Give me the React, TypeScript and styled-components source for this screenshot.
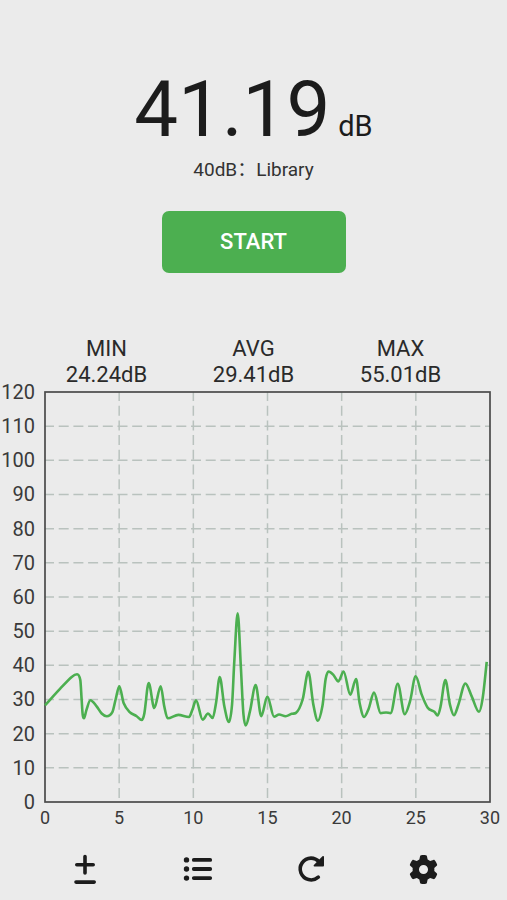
import React from "react";
import styled, { createGlobalStyle } from "styled-components";
import { FaGear } from "react-icons/fa6";

const GlobalStyle = createGlobalStyle`
  * { box-sizing: border-box; }
  body {
    margin: 0;
    background: #ebebeb;
    color: #1c1c1c;
    font-family: Roboto, "Noto Sans CJK SC", sans-serif;
  }
`;

const Screen = styled.main`
  display: flex;
  flex-direction: column;
  min-height: 100vh;
  padding-top: 64px;
`;

const Meter = styled.section`
  display: flex;
  flex-direction: column;
  align-items: center;
`;

const Reading = styled.h1`
  display: flex;
  align-items: baseline;
  gap: 8px;
  margin: 0;
  font-size: 78px;
  font-weight: 400;
  line-height: 92px;
`;

const Unit = styled.span`
  font-size: 29px;
  line-height: 32px;
`;

const Level = styled.p`
  margin: 2px 0 0;
  font-size: 19px;
  line-height: 24px;
  color: #333;
`;

const StartButton = styled.button`
  width: 184px;
  height: 62px;
  margin-top: 29px;
  border: 0;
  border-radius: 7px;
  background: #4caf50;
  color: #fff;
  font: 500 22px/26px Roboto, sans-serif;
`;

const Stats = styled.dl`
  display: grid;
  grid-template-columns: repeat(3, 1fr);
  margin: 63px 33px 0;
  font-size: 22px;
  line-height: 26px;
  text-align: center;
  color: #2a2a2a;
`;

const StatName = styled.dt``;

const StatValue = styled.dd`
  margin: 0;
`;

const Chart = styled.section`
  display: grid;
  grid-template-columns: 35px 1fr;
  column-gap: 10px;
  margin: 4px 17px 0 0;
  color: #3a3a3a;
`;

const DecibelAxis = styled.div`
  display: flex;
  flex-direction: column;
  justify-content: space-between;
  margin: -12px 0;
  font-size: 20px;
  line-height: 24px;
  text-align: right;
`;

const Plot = styled.svg`
  display: block;
  width: 100%;
  overflow: visible;
`;

const TimeAxis = styled.div`
  grid-column: 2;
  display: flex;
  justify-content: space-between;
  margin: 5px -15px 0;
  font-size: 18px;
  line-height: 22px;
  text-align: center;
`;

const Tick = styled.span`
  min-width: 30px;
`;

const Toolbar = styled.nav`
  display: grid;
  grid-template-columns: repeat(4, 1fr);
  margin: 18px 27px 0 29px;
`;

const ToolButton = styled.button`
  display: flex;
  align-items: center;
  justify-content: center;
  height: 44px;
  padding: 0;
  border: 0;
  background: none;
  color: #1c1c1c;
`;

const STATS = [
  { name: "MIN", value: "24.24dB" },
  { name: "AVG", value: "29.41dB" },
  { name: "MAX", value: "55.01dB" },
];

const DECIBELS = [120, 110, 100, 90, 80, 70, 60, 50, 40, 30, 20, 10, 0];
const SECONDS = [0, 5, 10, 15, 20, 25, 30];

const PLOT_WIDTH = 445;
const PLOT_HEIGHT = 410;

const SAMPLES: [number, number][] = [
  [0, 28.3], [1.01, 33.1], [1.8, 36.6], [2.16, 37.4], [2.38, 35.7], [2.47, 30], [2.54, 25.6], [2.63, 24.5],
  [2.79, 26.9], [3.06, 29.8], [3.48, 28], [3.82, 25.9], [4.16, 25.1], [4.54, 26.3], [4.76, 30], [5.01, 33.9],
  [5.3, 29], [5.69, 26.4], [6.18, 25.1], [6.52, 24], [6.7, 26], [6.99, 34.8], [7.37, 27.5], [7.8, 33.9],
  [8.04, 28], [8.27, 24.5], [8.99, 25.5], [9.71, 24.9], [9.93, 26.9], [10.18, 29.8], [10.63, 24.1],
  [10.99, 25.9], [11.3, 24.6], [11.53, 29], [11.78, 36.6], [12.09, 28], [12.4, 23.4], [12.61, 28.5],
  [12.76, 41], [12.99, 55.2], [13.21, 39], [13.37, 26.1], [13.53, 22.4], [13.82, 26.6], [14.2, 34.2],
  [14.58, 25.1], [14.99, 30.9], [15.44, 25], [15.78, 25.6], [16.22, 25.1], [16.63, 25.8], [16.92, 26.1],
  [17.37, 30], [17.75, 38.1], [18.09, 28.5], [18.4, 23.8], [18.7, 28], [18.92, 36], [19.12, 38.2],
  [19.44, 37.2], [19.78, 35.3], [20.13, 38.2], [20.58, 31.4], [20.97, 36], [21.21, 29], [21.51, 24.9],
  [21.82, 27.3], [22.18, 32], [22.63, 26], [22.99, 26.2], [23.3, 26], [23.78, 34.6], [24.25, 25.7],
  [24.61, 29.5], [24.99, 36.8], [25.39, 31.5], [25.8, 27.6], [26.25, 26.4], [26.47, 25.3], [26.67, 28],
  [26.99, 35.7], [27.3, 28.5], [27.57, 25.4], [27.87, 28.5], [28.34, 34.7], [28.76, 31], [29.26, 26.4],
  [29.51, 30.5], [29.78, 41],
];

const toX = (second: number) => (second / 30) * PLOT_WIDTH;
const toY = (decibel: number) => PLOT_HEIGHT - (decibel / 120) * PLOT_HEIGHT;

// Monotone cubic interpolation: the curve never overshoots a sample.
function smoothPath(samples: [number, number][]) {
  const points = samples.map(([s, d]) => [toX(s), toY(d)]);
  const slope = (i: number) =>
    (points[i + 1][1] - points[i][1]) / (points[i + 1][0] - points[i][0]);
  const last = points.length - 1;
  const tangents = points.map((_, i) => {
    if (i === 0) return slope(0);
    if (i === last) return slope(last - 1);
    const before = slope(i - 1);
    const after = slope(i);
    if (before * after <= 0) return 0;
    const across =
      (points[i + 1][1] - points[i - 1][1]) / (points[i + 1][0] - points[i - 1][0]);
    const limit = 3 * Math.min(Math.abs(before), Math.abs(after));
    return Math.sign(across) * Math.min(Math.abs(across), limit);
  });
  let path = `M${points[0][0]} ${points[0][1]}`;
  for (let i = 0; i < last; i++) {
    const [x0, y0] = points[i];
    const [x1, y1] = points[i + 1];
    const third = (x1 - x0) / 3;
    path += `C${x0 + third} ${y0 + tangents[i] * third} ${x1 - third} ${y1 - tangents[i + 1] * third} ${x1} ${y1}`;
  }
  return path;
}

const Icon = styled.svg.attrs({
  width: 32,
  height: 32,
  viewBox: "0 0 32 32",
  fill: "none",
  stroke: "currentColor",
  strokeLinecap: "round",
  strokeLinejoin: "round",
  "aria-hidden": true,
})``;

function PlusMinusIcon() {
  return (
    <Icon strokeWidth="3.6">
      <path d="M16 3.5v16.4M7.8 11.7h16.4M7 29.1h18.2" />
    </Icon>
  );
}

function ListIcon() {
  return (
    <Icon>
      <path d="M11.8 6.9h16.4M11.8 16h16.4M11.8 25.1h16.4" strokeWidth="3.8" />
      <path d="M4.5 6.9h.01M4.5 16h.01M4.5 25.1h.01" strokeWidth="5.4" />
    </Icon>
  );
}

function ReloadIcon() {
  return (
    <Icon>
      <path d="M23.3 24.2A10.9 10.9 0 1 1 16 5.1c3.6 0 6.1 1.5 8.4 4" strokeWidth="3.6" />
      <path d="M28.1 4v8.6h-8.6z" fill="currentColor" strokeWidth="1.8" />
    </Icon>
  );
}

export default function App() {
  return (
    <>
      <GlobalStyle />
      <Screen>
        <Meter>
          <Reading>
            41.19<Unit>dB</Unit>
          </Reading>
          <Level>40dB：Library</Level>
          <StartButton type="button">START</StartButton>
        </Meter>
        <Stats>
          {STATS.map(({ name, value }) => (
            <div key={name}>
              <StatName>{name}</StatName>
              <StatValue>{value}</StatValue>
            </div>
          ))}
        </Stats>
        <Chart aria-label="Sound level over time">
          <DecibelAxis>
            {DECIBELS.map((d) => (
              <span key={d}>{d}</span>
            ))}
          </DecibelAxis>
          <Plot viewBox={`0 0 ${PLOT_WIDTH} ${PLOT_HEIGHT}`} fill="none">
            <g stroke="#b9c2be" strokeWidth="1.5" strokeDasharray="10 4.7" strokeDashoffset="1">
              {DECIBELS.slice(1, -1).map((d) => (
                <path key={d} d={`M0 ${toY(d)}H${PLOT_WIDTH}`} />
              ))}
              {SECONDS.slice(1, -1).map((s) => (
                <path key={s} d={`M${toX(s)} 0V${PLOT_HEIGHT}`} />
              ))}
            </g>
            <rect width={PLOT_WIDTH} height={PLOT_HEIGHT} stroke="#4a4a4a" strokeWidth="1.7" />
            <path d={smoothPath(SAMPLES)} stroke="#4caf50" strokeWidth="2.6" strokeLinejoin="round" />
          </Plot>
          <TimeAxis>
            {SECONDS.map((s) => (
              <Tick key={s}>{s}</Tick>
            ))}
          </TimeAxis>
        </Chart>
        <Toolbar aria-label="Tools">
          <ToolButton type="button" aria-label="Calibrate">
            <PlusMinusIcon />
          </ToolButton>
          <ToolButton type="button" aria-label="History">
            <ListIcon />
          </ToolButton>
          <ToolButton type="button" aria-label="Reset">
            <ReloadIcon />
          </ToolButton>
          <ToolButton type="button" aria-label="Settings">
            <FaGear size={29} />
          </ToolButton>
        </Toolbar>
      </Screen>
    </>
  );
}
